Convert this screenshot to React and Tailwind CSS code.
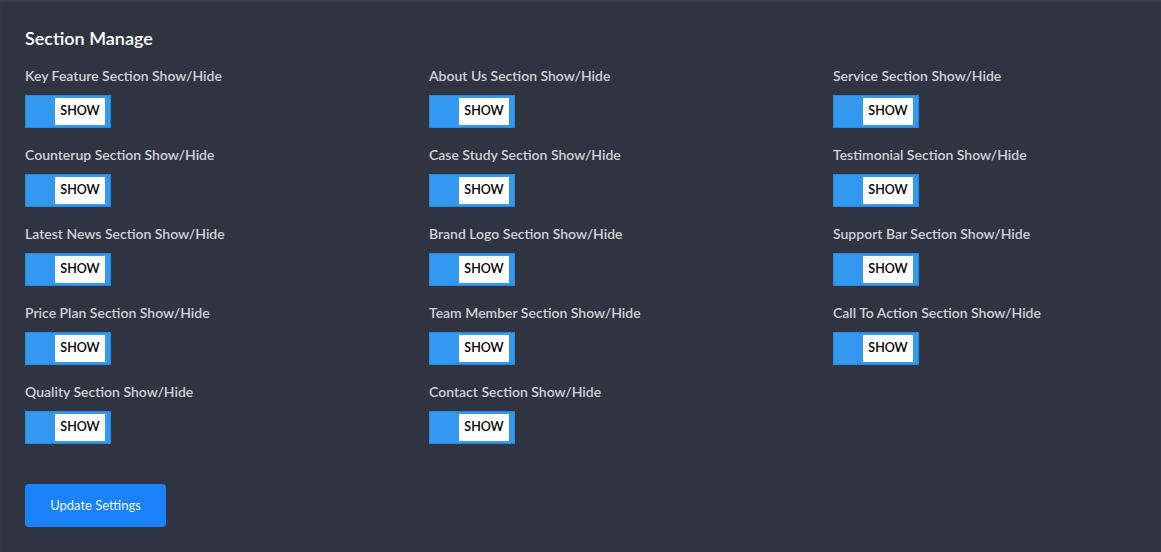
const sections = [
  "Key Feature Section Show/Hide",
  "About Us Section Show/Hide",
  "Service Section Show/Hide",
  "Counterup Section Show/Hide",
  "Case Study Section Show/Hide",
  "Testimonial Section Show/Hide",
  "Latest News Section Show/Hide",
  "Brand Logo Section Show/Hide",
  "Support Bar Section Show/Hide",
  "Price Plan Section Show/Hide",
  "Team Member Section Show/Hide",
  "Call To Action Section Show/Hide",
  "Quality Section Show/Hide",
  "Contact Section Show/Hide",
];

function Toggle() {
  return (
    <div className="flex h-[33px] w-[86px] items-center justify-end border border-[#2b87dc] bg-[#3399f0] pr-[5px]">
      <span className="flex h-[27px] w-[50px] items-center justify-center bg-white text-[12.5px] font-semibold text-black">
        SHOW
      </span>
    </div>
  );
}

export default function App() {
  return (
    <div
      className="min-h-[552px] overflow-hidden bg-[#2f3440] px-[25px] pt-[26px] pb-[25px] shadow-[inset_0_2px_2px_rgba(255,255,255,0.06)]"
      style={{ fontFamily: "Lato, 'Noto Sans', sans-serif" }}
    >
      {/* title */}
      <h2 className="text-[18px] leading-6 font-semibold text-white">Section Manage</h2>

      <div className="mt-4 grid w-[1212px] grid-cols-[404px_404px_404px]">
        {sections.map((s) => (
          <div key={s} className="flex h-[79px] flex-col">
            <p className="text-[14px] leading-5 font-semibold text-[#cfd2d7]">{s}</p>
            <div className="mt-[9px]">
              <Toggle />
            </div>
          </div>
        ))}
      </div>

      <button className="mt-[23px] h-[43px] w-[141px] rounded-[4px] bg-[#1a82fb] text-[13px] text-[#eef4ff]">
        Update Settings
      </button>
    </div>
  );
}
